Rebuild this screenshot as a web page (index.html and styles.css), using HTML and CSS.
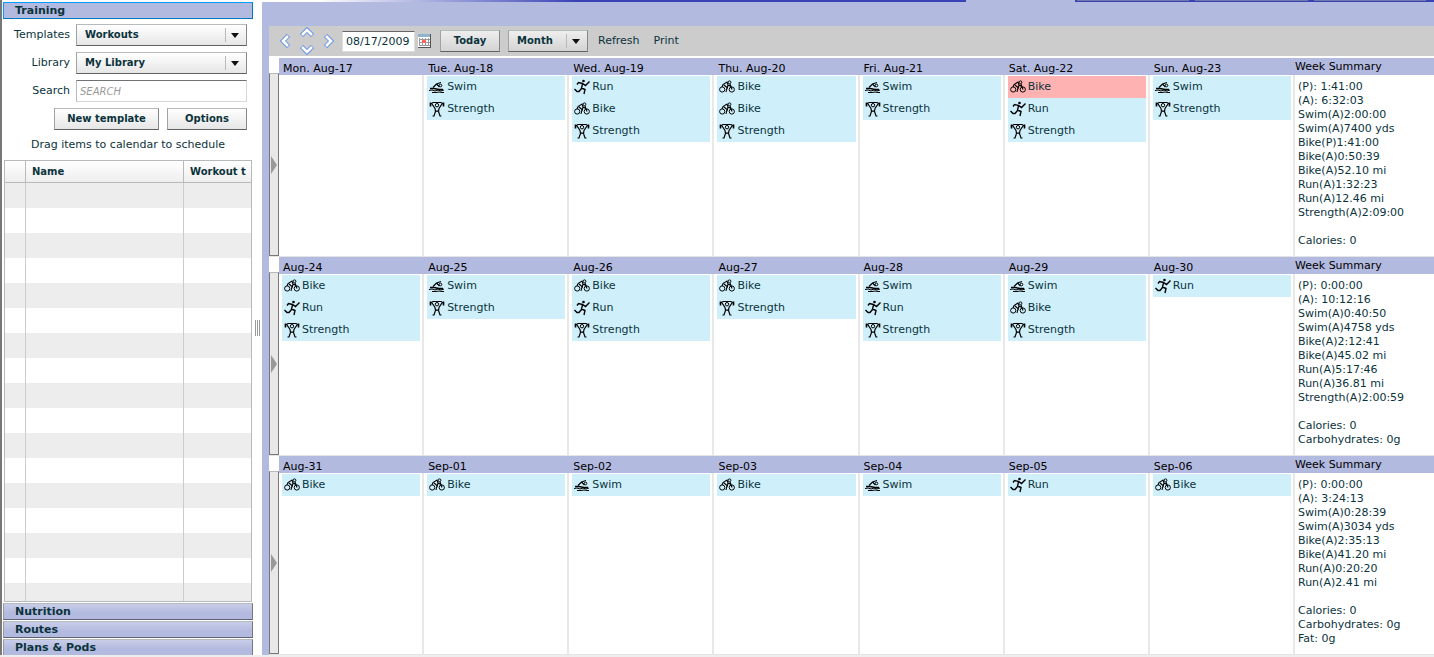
FILE: index.html
```html
<!DOCTYPE html>
<html lang="en">
<head>
    <meta charset="UTF-8">
    <meta name="viewport" content="width=device-width, initial-scale=1.0">
    <title>Training Calendar</title>
    <link rel="stylesheet" href="styles.css">
</head>
<body>
    <!-- Workout icons -->
    <svg class="sprite" aria-hidden="true">
        <symbol id="swim" viewBox="0 0 16 16">
            <path d="M4 8.5 7.500 5 12 3.500M7.500 5 10.500 8" fill="none" stroke="#000" stroke-width="1.200"/>
            <circle cx="11.500" cy="6.500" r="1.300" fill="none" stroke="#000"/>
            <path d="M1 9.500h4l5 1h4" fill="none" stroke="#000" stroke-width="1.500"/>
            <path d="M0 11.500l3-.5 3 1 3-1 3 1 3-1M3 13.500h4l3-.5 3 .5h2" fill="none" stroke="#000"/>
        </symbol>
        <symbol id="bike" viewBox="0 0 16 16">
            <circle cx="3.200" cy="10.500" r="2.600" fill="none" stroke="#000"/>
            <circle cx="12.800" cy="10.500" r="2.600" fill="none" stroke="#000"/>
            <path d="M3 8 4 5.500 8 3 9 6 12 7.500M5 6 8 8.500 7 13M9 6 8 10M11 5 13 10.500" fill="none" stroke="#000" stroke-width="1.100"/>
            <circle cx="10.500" cy="3.300" r="1.400" fill="none" stroke="#000"/>
        </symbol>
        <symbol id="run" viewBox="0 0 16 16">
            <circle cx="9.500" cy="2" r="1.300"/>
            <path d="M3 5.500 4.500 3.500 8.500 4.500 11.500 6.500 15.500 2.500M8.500 5 7.500 9 11 10.500 10 15M7.500 9.500 5 12.500 3 12.500.5 10" fill="none" stroke="#000" stroke-width="1.400"/>
        </symbol>
        <symbol id="strength" viewBox="0 0 16 16">
            <path d="M1 3.500 4 1.500h8l3 2" fill="none" stroke="#000" stroke-width="1.200"/>
            <path d="M1.500 1.500v4M14.500 1.500v4" fill="none" stroke="#000" stroke-width="1.600"/>
            <circle cx="8" cy="4.200" r="1.700" fill="none" stroke="#000"/>
            <path d="M3 3 6 7.500 6.500 10.500 5 15H3.500M13 3 10 7.500 9.500 10.500 11 15h1.500M6.500 10.500 8 10l1.500.5" fill="none" stroke="#000" stroke-width="1.200"/>
        </symbol>
        <symbol id="chevron" viewBox="0 0 12 14">
            <path d="M9.500 1.500 4 7l5.500 5.500" fill="none" stroke="#6490e8" stroke-width="4.500"/>
            <path d="M9 2 4 7l5 5" fill="none" stroke="#fff" stroke-width="2.600"/>
        </symbol>
    </svg>

    <div class="app">
        <!-- Sidebar -->
        <aside class="sidebar">
            <button class="section-header active">Training</button>
            <form class="filters">
                <label for="templates">Templates</label>
                <div class="dropdown">
                    <select id="templates"><option>Workouts</option></select>
                </div>
                <label for="library">Library</label>
                <div class="dropdown">
                    <select id="library"><option>My Library</option></select>
                </div>
                <label for="search">Search</label>
                <input id="search" type="text" placeholder="SEARCH">
                <div class="filter-buttons">
                    <button type="button" class="btn new-template">New template</button>
                    <button type="button" class="btn options">Options</button>
                </div>
            </form>
            <p class="hint">Drag items to calendar to schedule</p>
            <div class="list">
                <table>
                    <colgroup><col class="col-icon"><col class="col-name"><col class="col-type"></colgroup>
                    <thead>
                        <tr><th></th><th>Name</th><th>Workout t</th></tr>
                    </thead>
                    <tbody>
                        <tr><td></td><td></td><td></td></tr>
                        <tr><td></td><td></td><td></td></tr>
                        <tr><td></td><td></td><td></td></tr>
                        <tr><td></td><td></td><td></td></tr>
                        <tr><td></td><td></td><td></td></tr>
                        <tr><td></td><td></td><td></td></tr>
                        <tr><td></td><td></td><td></td></tr>
                        <tr><td></td><td></td><td></td></tr>
                        <tr><td></td><td></td><td></td></tr>
                        <tr><td></td><td></td><td></td></tr>
                        <tr><td></td><td></td><td></td></tr>
                        <tr><td></td><td></td><td></td></tr>
                        <tr><td></td><td></td><td></td></tr>
                        <tr><td></td><td></td><td></td></tr>
                        <tr><td></td><td></td><td></td></tr>
                        <tr><td></td><td></td><td></td></tr>
                        <tr><td></td><td></td><td></td></tr>
                    </tbody>
                </table>
            </div>
            <button class="section-header">Nutrition</button>
            <button class="section-header">Routes</button>
            <button class="section-header last">Plans &amp; Pods</button>
        </aside>

        <div class="splitter"><span class="grip"></span></div>

        <!-- Calendar -->
        <main class="main">
            <div class="tab-strip">
                <span class="strip-line"></span>
                <span class="strip-active"></span>
                <span class="strip-tabs"><i></i><i></i><i></i></span>
            </div>
            <div class="toolbar">
                <div class="nav">
                    <button class="nav-btn" aria-label="Previous"><svg><use href="#chevron"/></svg></button>
                    <div class="nav-vertical">
                        <button class="nav-btn up" aria-label="Up"><svg><use href="#chevron"/></svg></button>
                        <button class="nav-btn down" aria-label="Down"><svg><use href="#chevron"/></svg></button>
                    </div>
                    <button class="nav-btn next" aria-label="Next"><svg><use href="#chevron"/></svg></button>
                </div>
                <input class="date" type="text" value="08/17/2009" aria-label="Date">
                <button class="date-btn" aria-label="Pick a date">
                    <svg viewBox="0 0 14 14">
                        <path d="M0 0h13v13H0z" fill="#fff"/>
                        <path d="M0 0h12v3H0z" fill="#8fb4cc"/>
                        <path d="M1.500 4v8M4.500 4v8M7.500 4v8M10.500 4v8M1 5.500h11M1 8.500h11M1 11.500h11" stroke="#999" fill="none"/>
                        <path d="M4 6h4v3H4z" fill="#f66"/>
                        <path d="M12.500 0v13.500M0 13.500h13" stroke="#555" fill="none"/>
                    </svg>
                </button>
                <button class="btn today">Today</button>
                <div class="dropdown month">
                    <select aria-label="View"><option>Month</option></select>
                </div>
                <a href="#" class="link">Refresh</a>
                <a href="#" class="link">Print</a>
            </div>

            <div class="calendar">
                <section class="week">
                    <button class="handle" aria-label="Expand week"></button>
                    <div class="days">
                        <div class="day"><h2>Mon. Aug-17</h2><ul></ul></div>
                        <div class="day"><h2>Tue. Aug-18</h2>
                            <ul>
                                <li><svg><use href="#swim"/></svg>Swim</li>
                                <li><svg><use href="#strength"/></svg>Strength</li>
                            </ul>
                        </div>
                        <div class="day"><h2>Wed. Aug-19</h2>
                            <ul>
                                <li><svg><use href="#run"/></svg>Run</li>
                                <li><svg><use href="#bike"/></svg>Bike</li>
                                <li><svg><use href="#strength"/></svg>Strength</li>
                            </ul>
                        </div>
                        <div class="day"><h2>Thu. Aug-20</h2>
                            <ul>
                                <li><svg><use href="#bike"/></svg>Bike</li>
                                <li><svg><use href="#bike"/></svg>Bike</li>
                                <li><svg><use href="#strength"/></svg>Strength</li>
                            </ul>
                        </div>
                        <div class="day"><h2>Fri. Aug-21</h2>
                            <ul>
                                <li><svg><use href="#swim"/></svg>Swim</li>
                                <li><svg><use href="#strength"/></svg>Strength</li>
                            </ul>
                        </div>
                        <div class="day"><h2>Sat. Aug-22</h2>
                            <ul>
                                <li class="missed"><svg><use href="#bike"/></svg>Bike</li>
                                <li><svg><use href="#run"/></svg>Run</li>
                                <li><svg><use href="#strength"/></svg>Strength</li>
                            </ul>
                        </div>
                        <div class="day"><h2>Sun. Aug-23</h2>
                            <ul>
                                <li><svg><use href="#swim"/></svg>Swim</li>
                                <li><svg><use href="#strength"/></svg>Strength</li>
                            </ul>
                        </div>
                    </div>
                    <div class="summary">
                        <h2>Week Summary</h2>
                        <p>(P): 1:41:00<br>(A): 6:32:03<br>Swim(A)2:00:00<br>Swim(A)7400 yds<br>Bike(P)1:41:00<br>Bike(A)0:50:39<br>Bike(A)52.10 mi<br>Run(A)1:32:23<br>Run(A)12.46 mi<br>Strength(A)2:09:00</p>
                        <p>Calories: 0</p>
                    </div>
                </section>

                <section class="week">
                    <button class="handle" aria-label="Expand week"></button>
                    <div class="days">
                        <div class="day"><h2>Aug-24</h2>
                            <ul>
                                <li><svg><use href="#bike"/></svg>Bike</li>
                                <li><svg><use href="#run"/></svg>Run</li>
                                <li><svg><use href="#strength"/></svg>Strength</li>
                            </ul>
                        </div>
                        <div class="day"><h2>Aug-25</h2>
                            <ul>
                                <li><svg><use href="#swim"/></svg>Swim</li>
                                <li><svg><use href="#strength"/></svg>Strength</li>
                            </ul>
                        </div>
                        <div class="day"><h2>Aug-26</h2>
                            <ul>
                                <li><svg><use href="#bike"/></svg>Bike</li>
                                <li><svg><use href="#run"/></svg>Run</li>
                                <li><svg><use href="#strength"/></svg>Strength</li>
                            </ul>
                        </div>
                        <div class="day"><h2>Aug-27</h2>
                            <ul>
                                <li><svg><use href="#bike"/></svg>Bike</li>
                                <li><svg><use href="#strength"/></svg>Strength</li>
                            </ul>
                        </div>
                        <div class="day"><h2>Aug-28</h2>
                            <ul>
                                <li><svg><use href="#swim"/></svg>Swim</li>
                                <li><svg><use href="#run"/></svg>Run</li>
                                <li><svg><use href="#strength"/></svg>Strength</li>
                            </ul>
                        </div>
                        <div class="day"><h2>Aug-29</h2>
                            <ul>
                                <li><svg><use href="#swim"/></svg>Swim</li>
                                <li><svg><use href="#bike"/></svg>Bike</li>
                                <li><svg><use href="#strength"/></svg>Strength</li>
                            </ul>
                        </div>
                        <div class="day"><h2>Aug-30</h2>
                            <ul>
                                <li><svg><use href="#run"/></svg>Run</li>
                            </ul>
                        </div>
                    </div>
                    <div class="summary">
                        <h2>Week Summary</h2>
                        <p>(P): 0:00:00<br>(A): 10:12:16<br>Swim(A)0:40:50<br>Swim(A)4758 yds<br>Bike(A)2:12:41<br>Bike(A)45.02 mi<br>Run(A)5:17:46<br>Run(A)36.81 mi<br>Strength(A)2:00:59</p>
                        <p>Calories: 0<br>Carbohydrates: 0g</p>
                    </div>
                </section>

                <section class="week">
                    <button class="handle" aria-label="Expand week"></button>
                    <div class="days">
                        <div class="day"><h2>Aug-31</h2>
                            <ul><li><svg><use href="#bike"/></svg>Bike</li></ul>
                        </div>
                        <div class="day"><h2>Sep-01</h2>
                            <ul><li><svg><use href="#bike"/></svg>Bike</li></ul>
                        </div>
                        <div class="day"><h2>Sep-02</h2>
                            <ul><li><svg><use href="#swim"/></svg>Swim</li></ul>
                        </div>
                        <div class="day"><h2>Sep-03</h2>
                            <ul><li><svg><use href="#bike"/></svg>Bike</li></ul>
                        </div>
                        <div class="day"><h2>Sep-04</h2>
                            <ul><li><svg><use href="#swim"/></svg>Swim</li></ul>
                        </div>
                        <div class="day"><h2>Sep-05</h2>
                            <ul><li><svg><use href="#run"/></svg>Run</li></ul>
                        </div>
                        <div class="day"><h2>Sep-06</h2>
                            <ul><li><svg><use href="#bike"/></svg>Bike</li></ul>
                        </div>
                    </div>
                    <div class="summary">
                        <h2>Week Summary</h2>
                        <p>(P): 0:00:00<br>(A): 3:24:13<br>Swim(A)0:28:39<br>Swim(A)3034 yds<br>Bike(A)2:35:13<br>Bike(A)41.20 mi<br>Run(A)0:20:20<br>Run(A)2.41 mi</p>
                        <p>Calories: 0<br>Carbohydrates: 0g<br>Fat: 0g</p>
                    </div>
                </section>
            </div>
        </main>
    </div>
</body>
</html>
```

FILE: styles.css
```css
*, *::before, *::after {
    box-sizing: border-box;
    margin: 0;
    padding: 0;
}

body {
    font-family: Verdana, "DejaVu Sans", sans-serif;
    font-size: 11px;
    line-height: 14px;
    color: #0b333c;
    background: #eee;
}

button, input, select {
    font: inherit;
    color: inherit;
}

.sprite {
    display: none;
}

.app {
    display: flex;
    height: calc(100vh - 2px);
    background: #fff;
    border-left: 2px solid #777;
    overflow: hidden;
}

/* Sidebar */
.sidebar {
    display: flex;
    flex-direction: column;
    gap: 1px;
    flex: 0 0 251px;
    padding: 2px 0 0 1px;
}

.section-header {
    flex: none;
    height: 17px;
    padding-left: 11px;
    border: 1px solid #b7babc;
    border-color: #b7babc #777 #5f6373 #999;
    background: linear-gradient(#c8cde8, #b3badf 60%);
    font-size: 11px;
    font-weight: bold;
    line-height: 15px;
    text-align: left;
}

.section-header.active {
    border-color: #009dff #0076c1 #0076c1 #009dff;
    background: #b3badf;
}

.section-header.last {
    height: 16px;
    border-bottom: 0;
}

.filters {
    display: grid;
    grid-template-columns: 67px 1fr;
    gap: 6px;
    align-items: center;
    padding: 4px 6px 0 0;
}

.filters label {
    text-align: right;
}

.dropdown {
    position: relative;
    height: 22px;
}

.dropdown select {
    width: 100%;
    height: 22px;
    padding: 0 8px;
    border: 1px solid #b7babc;
    border-color: #b7babc #85888a #5f6062 #a0a3a5;
    border-radius: 0;
    background: linear-gradient(#fff, #e6e6e6);
    font-size: 10px;
    font-weight: bold;
    appearance: none;
}

/* separator and arrow over the select */
.dropdown::before {
    content: "";
    position: absolute;
    top: 4px;
    bottom: 4px;
    right: 21px;
    width: 1px;
    background: #b7babc;
    pointer-events: none;
}

.dropdown::after {
    content: "";
    position: absolute;
    top: 9px;
    right: 8px;
    border: 4px solid transparent;
    border-top: 5px solid #111;
    border-bottom: 0;
    pointer-events: none;
}

.filters input {
    width: 100%;
    height: 22px;
    padding: 0 3px;
    border: 1px solid #d5d7d8;
    border-color: #6f7274 #d5d7d8 #d5d7d8 #b7babc;
    background: #fff;
    font-size: 10px;
}

.filters input::placeholder {
    color: #999;
    font-style: italic;
}

.filter-buttons {
    grid-column: 1 / -1;
    display: flex;
    justify-content: flex-end;
    gap: 8px;
}

.btn {
    height: 22px;
    border: 1px solid #b7babc;
    border-color: #b7babc #85888a #5f6062 #a0a3a5;
    background: linear-gradient(#fff, #e6e6e6);
    font-size: 10px;
    font-weight: bold;
}

.new-template {
    width: 105px;
}

.options {
    width: 80px;
}

.hint {
    padding: 7px 0;
    text-align: center;
}

.list {
    flex: 1;
    min-height: 0;
    margin: 0 1px;
    border: 1px solid #b7babc;
    overflow: hidden;
}

.list table {
    width: 100%;
    table-layout: fixed;
    border-collapse: separate;
    border-spacing: 0;
}

.col-icon {
    width: 21px;
}

.col-type {
    width: 67px;
}

.list th {
    height: 22px;
    padding: 0 6px;
    border-right: 1px solid #b7babc;
    border-bottom: 1px solid #b7babc;
    background: linear-gradient(#fff, #eee);
    font-size: 10px;
    text-align: left;
    white-space: nowrap;
    overflow: hidden;
}

.list td {
    height: 25px;
    border-right: 1px solid #ccc;
}

.list th:last-child,
.list td:last-child {
    padding-right: 0;
    border-right: 0;
}

.list tbody tr:nth-child(odd) {
    background: #ededed;
}

.splitter {
    display: flex;
    flex: 0 0 9px;
    align-items: center;
    justify-content: center;
}

.grip {
    width: 5px;
    height: 16px;
    background: repeating-linear-gradient(90deg, #999 0 1px, #fff 1px 2px);
}

/* Main area */
.main {
    display: flex;
    flex-direction: column;
    flex: 1;
    min-width: 0;
    padding-left: 7px;
    background: #b3badf;
}

.tab-strip {
    display: flex;
    height: 2px;
    margin: 0 0 24px -7px;
}

.strip-line {
    flex: 704;
    background: linear-gradient(90deg, #fff 8%, #3842b5 45%);
}

.strip-active {
    flex: 109;
}

.strip-tabs {
    display: flex;
    gap: 6px;
    flex: 349;
    padding: 0 8px 1px 2px;
    background: #3842b5;
}

.strip-tabs i {
    flex: 1;
    background: #7078a8;
}

.toolbar {
    display: flex;
    align-items: center;
    flex: none;
    height: 30px;
    padding-left: 10px;
    background: #ccc;
}

.nav {
    display: flex;
    align-items: center;
    gap: 10px;
}

.nav-vertical {
    display: flex;
    flex-direction: column;
    gap: 4px;
}

.nav-btn, .date-btn {
    display: flex;
    border: 0;
    background: none;
}

.nav-btn svg {
    width: 12px;
    height: 14px;
}

.nav-btn.up svg {
    transform: rotate(90deg);
}

.nav-btn.down svg {
    transform: rotate(-90deg);
}

.nav-btn.next svg {
    transform: rotate(180deg);
}

.date {
    width: 73px;
    height: 21px;
    margin: 0 3px 0 7px;
    padding: 0 3px;
    border: 1px solid #ddd;
    border-top-color: #666;
    background: #fff;
}

.date-btn svg {
    width: 14px;
    height: 14px;
}

.today {
    width: 60px;
    margin: 0 8px;
}

.month {
    width: 80px;
}

.toolbar .btn,
.toolbar select {
    background: linear-gradient(#eee, #d4d4d4);
}

.link {
    margin-left: 10px;
    color: inherit;
    text-decoration: none;
}

.link + .link {
    margin-left: 14px;
}

/* Calendar weeks */
.calendar {
    display: grid;
    grid-template-rows: repeat(3, 1fr);
    flex: 1;
    min-height: 0;
    padding-top: 2px;
    background: #fff;
}

.week {
    display: grid;
    grid-template-columns: 10px 1fr 139px;
    min-height: 0;
    border-bottom: 1px solid #e4e4e4;
}

.handle {
    display: flex;
    align-items: center;
    margin-top: 15px;
    padding-left: 1px;
    border: 1px solid #777;
    border-top-color: #b7babc;
    background: #e8e8e8;
}

.handle::before {
    content: "";
    border: 9px solid transparent;
    border-left: 6px solid #999;
    border-right: 0;
}

.days {
    display: grid;
    grid-template-columns: repeat(7, 1fr);
}

.day {
    display: flex;
    flex-direction: column;
}

.day h2,
.summary h2 {
    height: 17px;
    padding: 3px 0 0 4px;
    background: #b3badf;
    color: #000;
    font-size: 11px;
    font-weight: normal;
    line-height: 16px;
}

.day ul {
    flex: 1;
    padding: 1px 2px 0 3px;
    border-right: 2px solid #e8e8e8;
    list-style: none;
}

.day li {
    display: flex;
    align-items: center;
    gap: 2px;
    height: 22px;
    padding-left: 2px;
    background: #cff0fb;
}

.day li.missed {
    background: #ffb2b2;
}

.day li svg {
    width: 16px;
    height: 16px;
}

.summary h2 {
    padding: 1px 0 0;
}

.summary p {
    padding-left: 3px;
}

.summary h2 + p {
    margin: 5px 0 14px;
}
```
